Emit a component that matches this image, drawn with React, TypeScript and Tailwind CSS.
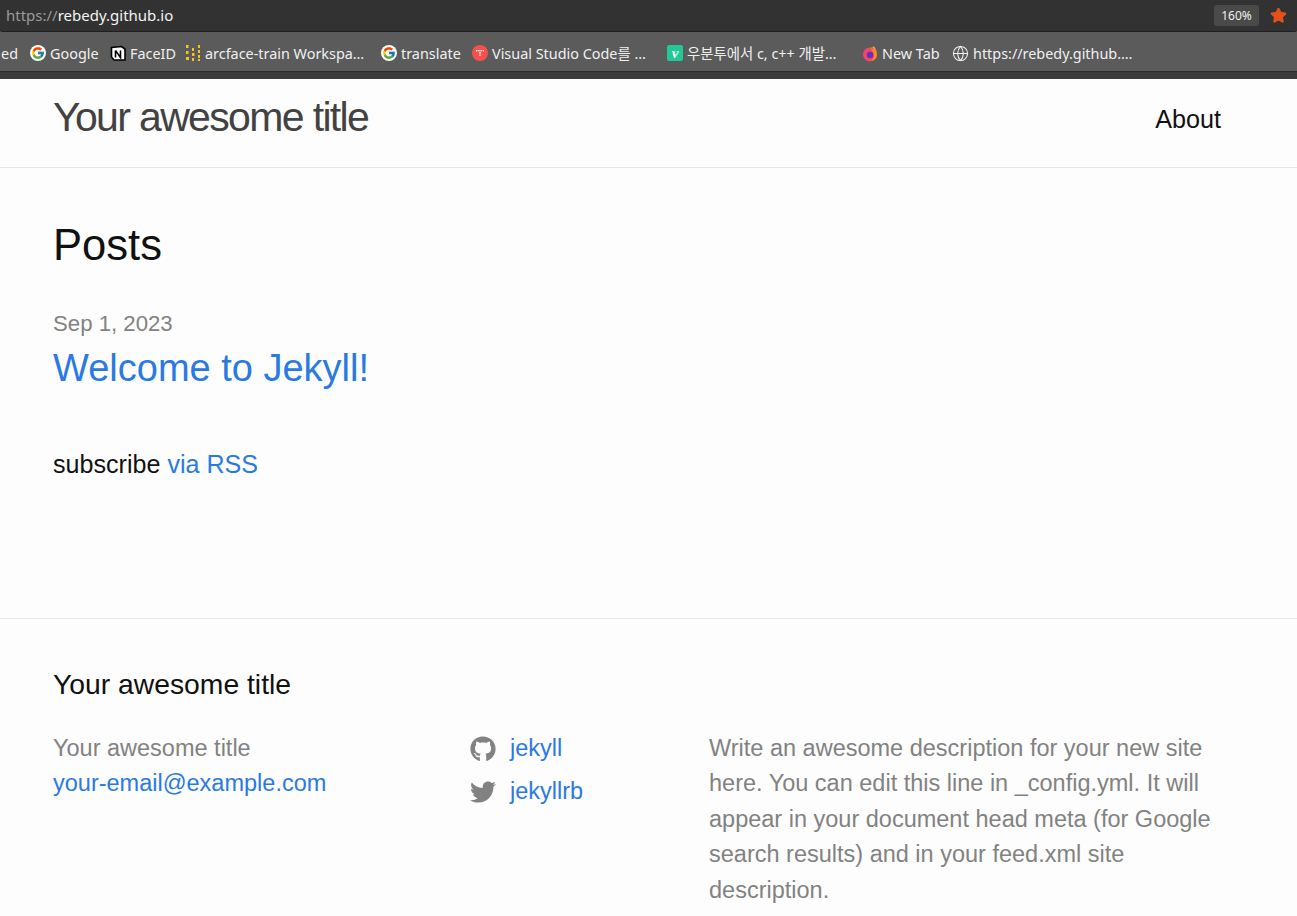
import { FaGithub, FaTwitter } from "react-icons/fa";
import { FcGoogle } from "react-icons/fc";
import { Globe, Star } from "lucide-react";

const UI_FONT = "font-['Noto_Sans','Noto_Sans_CJK_KR',sans-serif]";

const GoogleIcon = () => (
  <span className="w-4 h-4 rounded-full bg-white flex items-center justify-center shrink-0">
    <FcGoogle className="w-[14px] h-[14px]" />
  </span>
);

const NotionIcon = () => (
  <svg width="16" height="16" viewBox="0 0 16 16" className="shrink-0">
    <path d="M1.500 2.500 11.500 1.500 15 4V15H4L1.500 12Z" fill="#fff" stroke="#000" strokeWidth="1.6" />
    <path d="M5.500 5.500V12.500M5.500 5.500 10.500 12.500V5.500" fill="none" stroke="#000" strokeWidth="1.600" />
  </svg>
);

const DotsIcon = () => (
  <svg width="16" height="18" viewBox="0 0 16 18" className="shrink-0" fill="#f5c518">
    <rect x="1" y="1" width="2.500" height="3" />
    <rect x="1" y="7" width="2.500" height="3" />
    <rect x="1" y="13" width="3" height="3" />
    <rect x="7" y="4" width="2" height="3" />
    <rect x="7" y="9" width="2.500" height="3" />
    <rect x="7" y="14" width="2" height="3" />
    <rect x="13" y="1" width="2" height="3" />
    <rect x="13" y="6" width="2" height="3" />
    <rect x="13" y="11" width="2" height="3" />
    <rect x="13" y="15" width="2" height="2" />
  </svg>
);

const RedIcon = () => (
  <span className="w-4 h-4 rounded-full bg-[#f8504c] flex items-center justify-center shrink-0">
    <svg width="8" height="8" viewBox="0 0 8 8" fill="#fff">
      <rect x="0" y="1" width="1.400" height="1.400" />
      <rect x="2.200" y="1" width="1.400" height="1.400" />
      <rect x="4.400" y="1" width="1.400" height="1.400" />
      <rect x="6.600" y="1" width="1.400" height="1.400" />
      <rect x="3.300" y="3.200" width="1.400" height="1.400" />
      <rect x="3.300" y="5.400" width="1.400" height="1.400" />
    </svg>
  </span>
);

const VelogIcon = () => (
  <span className="w-4 h-4 rounded-[2px] bg-[#20c997] flex items-center justify-center shrink-0 text-white text-[15px] leading-none font-bold italic font-['Liberation_Serif',serif]">
    v
  </span>
);

const FirefoxIcon = () => (
  <svg width="16" height="17" viewBox="0 0 16 17" className="shrink-0">
    <circle cx="8" cy="9.500" r="7" fill="#f0456f" />
    <path d="M8 2.500A7 7 0 0 1 15 9.500C15 6 13.500 3 11.500 1 11.500 3 10 2.500 8 2.500Z" fill="#ffb01f" />
    <path d="M15 9.500A7 7 0 0 1 9 16C12 14 13 11 11 7 10.500 5 9 4 8 3.500 11 3.500 15 5 15 9.500Z" fill="#ff8a1f" />
    <circle cx="8" cy="10" r="3.200" fill="#6b2fb3" />
  </svg>
);

const BOOKMARKS = [
  { icon: <GoogleIcon />, label: "Google", width: "w-[80px]" },
  { icon: <NotionIcon />, label: "FaceID", width: "w-[75px]" },
  { icon: <DotsIcon />, label: "arcface-train Workspa…", width: "w-[196px]" },
  { icon: <GoogleIcon />, label: "translate", width: "w-[91px]" },
  { icon: <RedIcon />, label: "Visual Studio Code를 …", width: "w-[195px]" },
  { icon: <VelogIcon />, label: "우분투에서 c, c++ 개발…", width: "w-[195px]" },
  { icon: <FirefoxIcon />, label: "New Tab", width: "w-[90px]" },
  { icon: <Globe size={17} strokeWidth={1.5} className="shrink-0 text-[#f0f0f0]" />, label: "https://rebedy.github.…", width: "w-[190px]" },
];

const BrowserBar = () => (
  <div className={`bg-[#4a4a4a] ${UI_FONT}`}>
    <div className="h-[32px] bg-[#323232] border-b border-[#1f1f1f] rounded-b-[3px] flex items-center justify-between pl-[6px] pr-[10px]">
      <p className="text-[15px] text-[#f4f4f4]">
        <span className="text-[#9a9a9a]">https://</span>rebedy.github.io
      </p>
      <div className="flex items-center gap-[11px]">
        <span className="bg-[#4a4a4a] rounded-[3px] w-[45px] h-[21px] flex items-center justify-center text-[12px] text-[#f0f0f0]">
          160%
        </span>
        <Star size={17} className="text-[#e4511b] fill-[#e4511b]" />
      </div>
    </div>
    <div className="h-[40px] pt-[4px] bg-[#5b5b5b] border-b border-[#2b2b2b] flex items-center overflow-hidden text-[14.4px] text-[#f0f0f0] whitespace-nowrap">
      <span className="w-[30px] shrink-0 text-right pr-[12px] overflow-hidden">ed</span>
      {BOOKMARKS.map((b) => (
        <div key={b.label} className={`flex items-center gap-[4px] shrink-0 ${b.width}`}>
          {b.icon}
          <span>{b.label}</span>
        </div>
      ))}
    </div>
    <div className="h-[7px] bg-[#3c3c3c]" />
  </div>
);

const App = () => {
  return (
    <div className="h-[916px] overflow-hidden bg-[#fdfdfd] text-[#111] font-['Liberation_Sans',Arial,sans-serif]">
      <BrowserBar />
      <header className="h-[89px] border-b border-[#e8e8e8] flex justify-between px-[53px] pr-[76px]">
        <a className="text-[41px] leading-[76px] tracking-[-1.65px] text-[#424242]">Your awesome title</a>
        <a className="text-[25.2px] leading-[80px] text-[#111]">About</a>
      </header>
      <main className="h-[450px] px-[53px] pt-[50px]">
        <h1 className="text-[43.6px] leading-[54px]">Posts</h1>
        <p className="mt-[35px] text-[22.2px] leading-[34px] text-[#828282]">Sep 1, 2023</p>
        <a className="block mt-[4px] text-[38px] leading-[46px] text-[#2a7ae2]">Welcome to Jekyll!</a>
        <p className="mt-[54px] text-[25.1px] leading-[38px]">
          subscribe <span className="text-[#2a7ae2]">via RSS</span>
        </p>
      </main>
      <footer className="border-t border-[#e8e8e8] px-[53px] pt-[47px]">
        <h2 className="text-[28.3px] leading-[36px]">Your awesome title</h2>
        <div className="mt-[29px] flex text-[23.5px] leading-[35.4px]">
          <div className="w-[417px] shrink-0">
            <p className="text-[#828282]">Your awesome title</p>
            <p className="text-[#2a7ae2]">your-email@example.com</p>
          </div>
          <div className="w-[239px] shrink-0 text-[#2a7ae2] flex flex-col gap-[8px]">
            <div className="flex items-center gap-[14px]">
              <FaGithub size={26} className="text-[#828282]" />
              <span>jekyll</span>
            </div>
            <div className="flex items-center gap-[14px]">
              <FaTwitter size={26} className="text-[#828282]" />
              <span>jekyllrb</span>
            </div>
          </div>
          <p className="w-[520px] text-[#828282]">
            Write an awesome description for your new site here. You can edit this line in _config.yml. It will appear in your document head meta (for Google search results) and in your feed.xml site description.
          </p>
        </div>
      </footer>
    </div>
  );
};

export default App;
